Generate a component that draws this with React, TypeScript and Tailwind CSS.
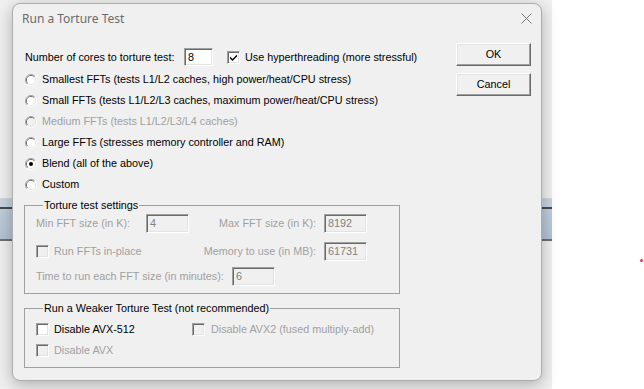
import React from 'react'

const sunken =
  'border border-t-[#a0a0a0] border-l-[#a0a0a0] border-r-white border-b-white shadow-[inset_1px_1px_0_#696969,inset_-1px_-1px_0_#e3e3e3]'
const raised =
  'border border-t-white border-l-white border-r-[#696969] border-b-[#696969] shadow-[inset_-1px_-1px_0_#a0a0a0,inset_1px_1px_0_#e3e3e3]'

function Radio({ checked = false, disabled = false }: { checked?: boolean; disabled?: boolean }) {
  return (
    <svg width="12" height="12" viewBox="0 0 12 12" className="shrink-0">
      <defs>
        <linearGradient id="rOuter" x1="0" y1="0" x2="1" y2="1">
          <stop offset="0.5" stopColor="#a0a0a0" />
          <stop offset="0.5" stopColor="#ffffff" />
        </linearGradient>
        <linearGradient id="rInner" x1="0" y1="0" x2="1" y2="1">
          <stop offset="0.5" stopColor="#696969" />
          <stop offset="0.5" stopColor="#e3e3e3" />
        </linearGradient>
      </defs>
      <circle cx="6" cy="6" r="5.5" fill="none" stroke="url(#rOuter)" />
      <circle cx="6" cy="6" r="4.5" fill="none" stroke="url(#rInner)" />
      <circle cx="6" cy="6" r="4" fill={disabled ? '#f0f0f0' : '#ffffff'} />
      {checked && <circle cx="6" cy="6" r="2" fill="#000" />}
    </svg>
  )
}

function Check({ checked = false, disabled = false }: { checked?: boolean; disabled?: boolean }) {
  return (
    <div
      className={`w-[13px] h-[13px] shrink-0 flex items-center justify-center ${sunken} ${
        disabled ? 'bg-[#f0f0f0]' : 'bg-white'
      }`}
    >
      {checked && (
        <svg width="9" height="9" viewBox="0 0 9 9">
          <path d="M1 3.5 L3.5 6 L8 1.5 L8 3.5 L3.5 8 L1 5.5 Z" fill="#000" />
        </svg>
      )}
    </div>
  )
}

function Field({ value, w, disabled = false }: { value: string; w: string; disabled?: boolean }) {
  return (
    <div
      className={`${w} h-[19px] shrink-0 flex items-center pl-[3px] ${sunken} ${
        disabled ? 'bg-[#f0f0f0] text-[#808080]' : 'bg-white text-black'
      }`}
    >
      {value}
    </div>
  )
}

const radios = [
  { label: 'Smallest FFTs (tests L1/L2 caches, high power/heat/CPU stress)' },
  { label: 'Small FFTs (tests L1/L2/L3 caches, maximum power/heat/CPU stress)' },
  { label: 'Medium FFTs (tests L1/L2/L3/L4 caches)', disabled: true },
  { label: 'Large FFTs (stresses memory controller and RAM)' },
  { label: 'Blend (all of the above)', checked: true },
  { label: 'Custom' },
]

export default function App() {
  return (
    <div className="relative w-[644px] h-[389px] bg-white overflow-hidden whitespace-nowrap font-['Liberation_Sans',Arial,sans-serif] text-[10.8px] leading-[13px] text-black">
      {/* window behind the dialog */}
      <div className="flex flex-col w-[552px] h-full">
        <div className="h-[198px] bg-[#f0f0f0]" />
        <div className="h-px bg-[#d6d6d6]" />
        <div className="h-[8px] bg-[#c7d4e2]" />
        <div className="h-[2px] bg-[#4a4a4a]" />
        <div className="h-[30px] bg-gradient-to-b from-[#bfcddc] to-[#b3c3d4]" />
        <div className="h-[2px] bg-[#6f6f6f]" />
        <div className="flex-1 bg-[#f0f0f0]" />
      </div>

      <div className="absolute left-[640px] top-[259px] w-[3px] h-[3px] rounded-full bg-[#e83a3a]" />

      {/* dialog */}
      <div className="absolute left-[12px] top-[3px] w-[530px] h-[378px] rounded-[8px] border border-[#adadad] bg-[#f0f0f0] shadow-[0_4px_16px_rgba(0,0,0,0.28)] flex flex-col">
        <div className="h-[29px] flex items-center justify-between pl-[9px] pr-[9px]">
          <span className="font-['Noto_Sans',sans-serif] text-[12px] text-[#6b6b6b]">Run a Torture Test</span>
          <svg width="11" height="11" viewBox="0 0 11 11">
            <path d="M0.5 0.5 L10.5 10.5 M10.5 0.5 L0.5 10.5" stroke="#7a7a7a" strokeWidth="1" />
          </svg>
        </div>

        <div className="flex pt-[12px] pl-[11px]">
          <div className="w-[376px] shrink-0 flex flex-col">
            <div className="h-[24px] flex items-center pl-[1px]">
              <span className="w-[159px] shrink-0">Number of cores to torture test:</span>
              <div className={`w-[29px] h-[18px] shrink-0 bg-white flex items-center pl-[3px] ${sunken}`}>8</div>
              <div className="ml-[14px]">
                <Check checked />
              </div>
              <span className="ml-[5px]">Use hyperthreading (more stressful)</span>
            </div>

            {radios.map((r) => (
              <div key={r.label} className="h-[21px] flex items-center gap-[5px] pl-[1px]">
                <Radio checked={r.checked} disabled={r.disabled} />
                <span className={r.disabled ? 'text-[#a0a0a0]' : ''}>{r.label}</span>
              </div>
            ))}

            <fieldset className="mt-[4px] border border-[#a0a0a0] pl-[11px] pt-[1px] pb-[7px] text-[#a0a0a0]">
              <legend className="ml-[7px] px-[1px] text-black">Torture test settings</legend>
              <div className="h-[20px] flex items-center">
                <span className="w-[110px] shrink-0">Min FFT size (in K):</span>
                <Field value="4" w="w-[43px]" disabled />
                <span className="w-[127px] shrink-0 text-right">Max FFT size (in K):</span>
                <div className="ml-[8px]">
                  <Field value="8192" w="w-[43px]" disabled />
                </div>
              </div>
              <div className="h-[20px] mt-[8px] flex items-center">
                <Check disabled />
                <span className="ml-[5px] w-[135px] shrink-0">Run FFTs in-place</span>
                <span className="w-[127px] shrink-0 text-right">Memory to use (in MB):</span>
                <div className="ml-[8px]">
                  <Field value="61731" w="w-[43px]" disabled />
                </div>
              </div>
              <div className="h-[20px] mt-[5px] flex items-center">
                <span className="w-[196px] shrink-0">Time to run each FFT size (in minutes):</span>
                <Field value="6" w="w-[43px]" disabled />
              </div>
            </fieldset>

            <fieldset className="mt-[8px] border border-[#a0a0a0] pl-[11px] pt-[4px] pb-[6px]">
              <legend className="ml-[7px] px-[1px]">Run a Weaker Torture Test (not recommended)</legend>
              <div className="h-[21px] flex items-center">
                <Check />
                <span className="ml-[5px] w-[138px] shrink-0">Disable AVX-512</span>
                <Check disabled />
                <span className="ml-[6px] text-[#a0a0a0]">Disable AVX2 (fused multiply-add)</span>
              </div>
              <div className="h-[21px] flex items-center">
                <Check disabled />
                <span className="ml-[5px] text-[#a0a0a0]">Disable AVX</span>
              </div>
            </fieldset>
          </div>

          <div className="ml-[56px] -mt-[2px] flex flex-col gap-[7px]">
            <button className={`w-[75px] h-[23px] bg-[#f0f0f0] ${raised}`}>OK</button>
            <button className={`w-[75px] h-[23px] bg-[#f0f0f0] ${raised}`}>Cancel</button>
          </div>
        </div>
      </div>
    </div>
  )
}
